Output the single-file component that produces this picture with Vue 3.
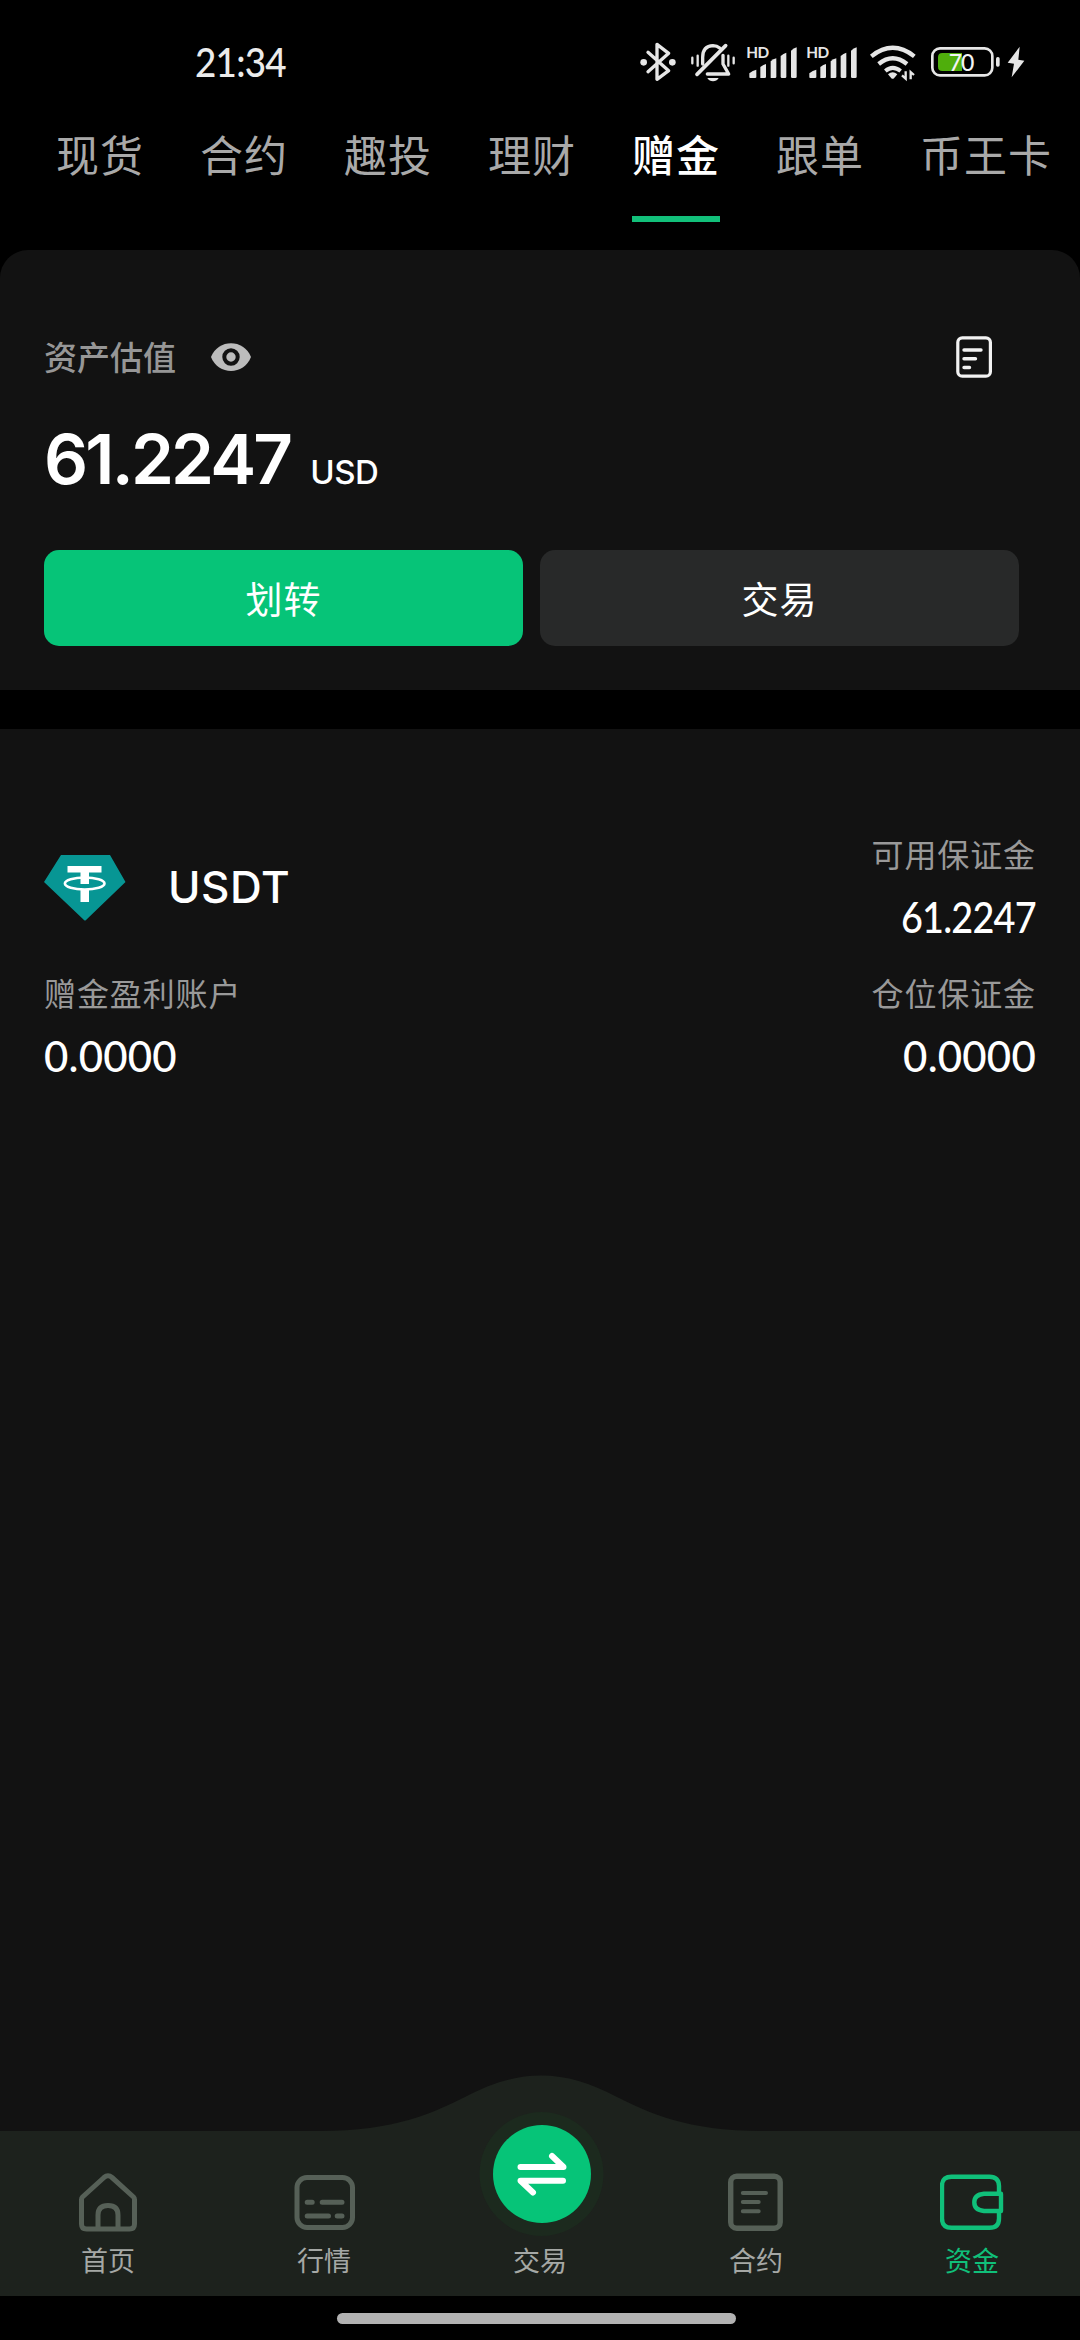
<script setup>
const tabs = ['现货', '合约', '趣投', '理财', '赠金', '跟单', '币王卡']
const activeTab = '赠金'
</script>

<template>
  <div class="screen">
    <header class="status">
      <span class="clock">21:34</span>
      <svg class="status-icons" width="430" height="80" viewBox="0 0 1290 240" fill="none">
        <g stroke="#e6e6e6" stroke-width="10" stroke-linejoin="round" stroke-linecap="round">
          <path d="M84 97 L146 152 L111 178 V73 L146 100 L84 155" />
        </g>
        <g fill="#e6e6e6">
          <circle cx="71" cy="127" r="10" />
          <circle cx="157" cy="127" r="10" />
        </g>
        <g stroke="#e6e6e6" stroke-width="9" stroke-linecap="round">
          <path d="M231 163 L317 77" stroke-width="11" />
          <path d="M248 132 V112 Q248 78 279 77 Q291 77 299 84" stroke-width="10" />
          <path d="M309 106 V132 L326 162 H262" stroke-width="10" stroke-linejoin="round" />
          <path d="M217 113 V130 M233 107 V137 M325 107 V137 M341 113 V130" stroke-width="7" />
        </g>
        <path d="M262 174 H296 Q290 184 279 184 Q268 184 262 174 Z" fill="#e6e6e6" />
        <g v-for="x in [0, 180]" :key="x" :transform="`translate(${x} 0)`" fill="#e6e6e6">
          <text class="hd" x="379" y="113">HD</text>
          <path d="M388 172 V160 Q398 151 409 149 V172 Q409 174 405 174 H391 Q388 174 388 172 Z" />
          <path d="M421 174 V141 Q430 134 438 132 V170 Q438 174 434 174 Z" />
          <path d="M452 174 V124 Q460 117 469 115 V170 Q469 174 465 174 H456 Z" />
          <path d="M482 170 V108 Q490 100 499 98 V170 Q499 174 495 174 H486 Q482 174 482 170 Z" />
          <path d="M513 170 V92 Q521 84 530 82 V170 Q530 174 526 174 H517 Q513 174 513 170 Z" />
        </g>
        <g stroke="#e6e6e6" stroke-width="13">
          <path d="M754 109 Q818 58 883 109" />
          <path d="M776 132 Q818 98 861 132" />
          <path d="M796 153 Q818 134 842 153" stroke-width="12" />
        </g>
        <path d="M804 163 Q818 150 832 163 L822 175 Q818 178 814 175 Z" fill="#e6e6e6" />
        <path d="M857 154 V176 L846 166 M872 178 V156 L882 165" stroke="#e6e6e6" stroke-width="7" />
        <rect x="937" y="85" width="180" height="81" rx="23" stroke="#e6e6e6" stroke-width="8" />
        <path d="M967 99 H1026 V153 H967 Q954 153 954 140 V112 Q954 99 967 99 Z" fill="#4fae0c" />
        <text class="charge" x="986" y="152">70</text>
        <rect x="1128" y="111" width="11" height="29" rx="5" fill="#e6e6e6" />
        <path d="M1199 80 L1163 128 L1182 131 L1175 172 L1213 122 L1195 119 Z" fill="#e6e6e6" />
      </svg>
    </header>

    <nav class="tabs">
      <span v-for="t in tabs" :key="t" class="tab" :class="{ active: t === activeTab }">{{ t }}</span>
    </nav>

    <section class="summary">
      <div class="summary-head">
        <span class="summary-label">资产估值</span>
        <svg class="eye" width="42" height="30" viewBox="0 0 42 30">
          <path d="M1 15 C8 -3.5 34 -3.5 41 15 C34 33.500 8 33.500 1 15 Z" fill="#bcbcbc" />
          <circle cx="21" cy="15" r="6.700" fill="#bcbcbc" stroke="#121212" stroke-width="4" />
        </svg>
        <svg class="record" width="36" height="42" viewBox="0 0 36 42" fill="none" stroke="#f2f2f2">
          <rect x="1.800" y="1.800" width="32.600" height="38.400" rx="4.500" stroke-width="3.200" />
          <path d="M8 14 H25 M8 22.800 H19.500 M8 31.500 H13.500" stroke-width="3.400" stroke-linecap="round" />
        </svg>
      </div>
      <div class="total"><span class="total-value">61.2247</span><span class="total-unit">USD</span></div>
      <div class="actions">
        <button class="btn primary">划转</button>
        <button class="btn">交易</button>
      </div>
    </section>

    <section class="asset">
      <div class="asset-row first">
        <div class="coin">
          <svg width="82" height="66" viewBox="0 0 82 66">
            <path d="M17 0 H66 L81.500 27 L42 65 Q41 66 40 65 L0 27 Z" fill="#079694" />
            <path d="M23.500 11 H57.500 V17.500 H45 V29 H36.500 V17.500 H23.500 Z M36.500 34 H45 V47 H36.500 Z" fill="#fff" />
            <ellipse cx="40.700" cy="28.500" rx="19.800" ry="6" fill="none" stroke="#fff" stroke-width="2.600" />
          </svg>
          <span class="coin-name">USDT</span>
        </div>
        <div class="cell right">
          <span class="cell-label">可用保证金</span>
          <span class="cell-value tight">61.2247</span>
        </div>
      </div>
      <div class="asset-row">
        <div class="cell">
          <span class="cell-label">赠金盈利账户</span>
          <span class="cell-value">0.0000</span>
        </div>
        <div class="cell right">
          <span class="cell-label">仓位保证金</span>
          <span class="cell-value">0.0000</span>
        </div>
      </div>
    </section>

    <footer class="dock">
      <svg class="dock-bg" width="1080" height="221" viewBox="0 0 1080 221">
        <path d="M0 56 H320 C395 56 433 38 465 22 C492 8 515 0.500 541 0.500 C567 0.500 590 8 617 22 C649 38 687 56 762 56 H1080 V221 H0 Z" fill="#1d221d" />
        <circle cx="541.500" cy="99" r="62" fill="#1c2a1e" />
      </svg>
      <div class="dock-item">
        <svg width="64" height="64" viewBox="0 0 64 64" fill="none" stroke="#566057" stroke-width="5">
          <path d="M28 6.500 Q32 3 36 6.500 L57.500 26 Q58.500 27 58.500 28.500 V53 Q58.500 58 53.500 58 H10.500 Q5.500 58 5.500 53 V28.500 Q5.500 27 6.500 26 Z" stroke-linejoin="round" />
          <path d="M22 58 V44 Q22 34.500 32 34.500 Q42 34.500 42 44 V58" />
        </svg>
        <span>首页</span>
      </div>
      <div class="dock-item">
        <svg width="64" height="64" viewBox="0 0 64 64" fill="none" stroke="#566057" stroke-width="5">
          <rect x="5" y="6.500" width="55.500" height="50" rx="10" />
          <path d="M15.200 31.300 H20.200 M30.200 31.300 H50 M15.200 45 H36.500 M45.200 45 H50" stroke-linecap="round" />
        </svg>
        <span>行情</span>
      </div>
      <div class="dock-item center">
        <div class="swap">
          <svg width="98" height="98" viewBox="0 0 98 98" fill="none" stroke="#fff" stroke-width="6" stroke-linecap="round" stroke-linejoin="round">
            <path d="M27.500 42 H70.500 L59 31 M70 55.700 H27.500 L40 67.500" />
          </svg>
        </div>
        <span>交易</span>
      </div>
      <div class="dock-item">
        <svg width="64" height="64" viewBox="0 0 64 64" fill="none" stroke="#566057" stroke-width="5.400">
          <rect x="6.700" y="5.200" width="49.500" height="52" rx="6" />
          <path d="M18.800 22 H42 M18.800 31 H34.700 M18.800 40.300 H34.700" stroke-width="4" stroke-linecap="round" />
        </svg>
        <span>合约</span>
      </div>
      <div class="dock-item current">
        <svg width="64" height="64" viewBox="0 0 64 64" fill="none" stroke="#10c07a" stroke-width="4.400">
          <path d="M59 21 V15 Q59 5.700 49.500 5.700 H11.500 Q2 5.700 2 15 V47.500 Q2 56.800 11.500 56.800 H49.500 Q59 56.800 59 47.500 V41" />
          <path d="M61 22.700 H44 Q34.300 23.500 34.300 31.300 Q34.300 39.200 44 40 H61 Z" stroke-linejoin="round" />
        </svg>
        <span>资金</span>
      </div>
    </footer>
    <div class="gesture"><i></i></div>
  </div>
</template>

<style>
body { margin: 0; background: #000; }
</style>

<style scoped>
.screen {
  width: 1080px;
  height: 2340px;
  display: flex;
  flex-direction: column;
  background: #000;
  color: #fff;
  font-family: "Noto Sans CJK SC", sans-serif;
  overflow: hidden;
}
.status {
  height: 100px;
  box-sizing: border-box;
  padding: 20px 30px 0 195px;
  display: flex;
  justify-content: space-between;
}
.clock {
  font: 500 40px/84px Lato, sans-serif;
  letter-spacing: -0.8px;
  transform: scaleX(0.92);
  transform-origin: left;
  color: #ebebeb;
}
.status-icons { display: block; }
.hd { font: 700 46px Lato, sans-serif; letter-spacing: -2px; }
.charge { font: 500 69px Lato, sans-serif; fill: #f4f4f4; letter-spacing: -3px; }
.tabs {
  height: 150px;
  box-sizing: border-box;
  padding: 0 0 28px 56px;
  display: flex;
  gap: 56px;
}
.tab {
  flex: none;
  box-sizing: border-box;
  height: 122px;
  font-size: 43px;
  letter-spacing: 1px;
  line-height: 107px;
  color: #a9a9a9;
}
.active { color: #fff; font-weight: 500; border-bottom: 6px solid #12c07a; }
.summary {
  height: 440px;
  box-sizing: border-box;
  flex: none;
  border-radius: 28px 28px 0 0;
  background: #121212;
  padding: 82px 61px 44px 44px;
  display: flex;
  flex-direction: column;
}
.summary-head { display: flex; align-items: center; height: 50px; }
.summary-label { font-size: 33px; line-height: 46px; font-weight: 500; color: #969696; margin-top: -2px; }
.eye { margin-left: 34px; }
.record { margin-left: auto; margin-right: 27px; }
.total { height: 168px; display: flex; align-items: baseline; line-height: 154px; }
.total-value { font-family: Inter, sans-serif; font-weight: 600; font-size: 69px; letter-spacing: -2.8px; }
.total-unit { font-family: Inter, sans-serif; font-weight: 500; font-size: 33px; letter-spacing: -0.5px; margin-left: 20px; }
.actions { display: flex; gap: 17px; }
.btn {
  flex: 1;
  height: 96px;
  padding: 0;
  border: 0;
  border-radius: 15px;
  background: #282929;
  color: #fff;
  font: 400 37px/94px "Noto Sans CJK SC", sans-serif;
  letter-spacing: 1px;
}
.primary { background: #06c478; }
.asset {
  flex: 1;
  margin-top: 39px;
  background: #121212;
  padding: 101px 44px 0 44px;
}
.asset-row { display: flex; justify-content: space-between; height: 139px; }
.coin { display: flex; align-items: center; height: 116px; }
.coin-name { font: 500 44px/60px Inter, sans-serif; margin-left: 42px; letter-spacing: 0.5px; margin-top: -2px; }
.cell { display: flex; flex-direction: column; }
.right { align-items: flex-end; }
.cell-label { font-size: 32px; letter-spacing: 0.900px; line-height: 46px; color: #999; }
.cell-value { font: 500 42px/50px Lato, sans-serif; letter-spacing: 0.200px; margin-top: 16px; }
.right .tight {
  letter-spacing: -0.900px;
  transform: scaleX(0.9);
  transform-origin: right;
}
.dock {
  flex: none;
  position: relative;
  height: 165px;
  display: flex;
}
.dock-bg { position: absolute; left: 0; bottom: 0; }
.dock-item {
  position: relative;
  flex: 1;
  display: flex;
  flex-direction: column;
  align-items: center;
  justify-content: flex-end;
  box-sizing: border-box;
  padding-bottom: 16px;
  font-size: 27px;
  line-height: 40px;
  color: #a5a8a5;
}
.dock-item svg { display: block; margin-bottom: 5px; }
.swap { width: 98px; height: 98px; border-radius: 50%; background: #06c478; margin: 0 0 17px 3px; }
.current { color: #10c07a; }
.gesture { flex: none; height: 44px; display: flex; justify-content: center; }
.gesture i { width: 399px; height: 11px; border-radius: 6px; background: #b2b2b2; margin-top: 17px; margin-right: 7px; }
</style>
